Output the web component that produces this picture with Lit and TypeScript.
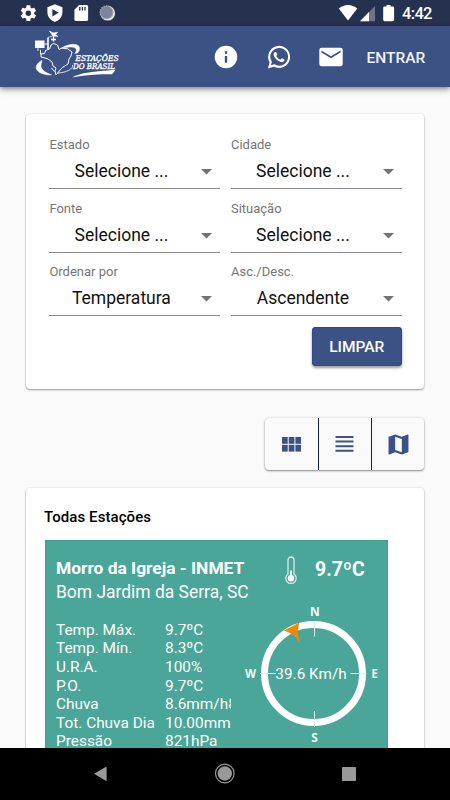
import { LitElement, html, css, svg } from "lit";
import { customElement, property } from "lit/decorators.js";

@customElement("status-bar")
class StatusBar extends LitElement {
  static styles = css`
    :host { display: block; height: 26px; background: #26304f; flex: none; }
    svg { display: block; }
    text { font: 500 16.5px Roboto, sans-serif; fill: #fff; }
  `;
  render() {
    return html`<svg width="450" height="26" viewBox="0 0 450 26" fill="#fff">
      <g transform="translate(19 3.8) scale(.78)">
        <path d="M19.43 12.98c.04-.32.07-.64.07-.98s-.03-.66-.07-.98l2.11-1.65c.19-.15.24-.42.12-.64l-2-3.46c-.12-.22-.39-.3-.61-.22l-2.49 1c-.52-.4-1.08-.73-1.69-.98l-.38-2.65C14.46 2.18 14.25 2 14 2h-4c-.25 0-.46.18-.49.42l-.38 2.65c-.61.25-1.17.59-1.69.98l-2.49-1c-.23-.09-.49 0-.61.22l-2 3.46c-.13.22-.07.49.12.64l2.11 1.65c-.04.32-.07.65-.07.98s.03.66.07.98l-2.11 1.65c-.19.15-.24.42-.12.64l2 3.46c.12.22.39.3.61.22l2.49-1c.52.4 1.08.73 1.69.98l.38 2.65c.03.24.24.42.49.42h4c.25 0 .46-.18.49-.42l.38-2.65c.61-.25 1.17-.59 1.69-.98l2.49 1c.23.09.49 0 .61-.22l2-3.46c.12-.22.07-.49-.12-.64zM12 15.5a3.5 3.5 0 1 1 0-7 3.5 3.5 0 0 1 0 7z"/>
      </g>
      <path d="M54.900 4.200l7.500 3.100v5c0 4.500-3.200 8.200-7.500 9.600-4.300-1.400-7.500-5.100-7.500-9.600v-5z"/>
      <path d="M52.400 9v7.600l6.200-3.800z" fill="#26304f"/>
      <path d="M79.200 5h7.300q1.600 0 1.600 1.600v12.900q0 1.600-1.600 1.600H76q-1.600 0-1.600-1.600V9.800z"/>
      <path d="M79.800 7v3.600M82.400 7v3.600M85 7v3.600" stroke="#26304f" stroke-width="1.300"/>
      <circle cx="107.700" cy="13.200" r="7.400" fill="#e4e6ec"/>
      <circle cx="106.500" cy="12.400" r="6.600" fill="#7d849b"/>
      <circle cx="106.500" cy="12.400" r="6.400" fill="none" stroke="#a9aebd" stroke-width="1.300" stroke-dasharray="1.200 1.200"/>
      <path d="M338.800 8.500C344 3.700 352 3.700 357.300 8.500L348 20.600z"/>
      <path d="M375 6v15.200h-15z" fill="#6d748b"/>
      <path d="M369 12.100v9.100h-9z"/>
      <path d="M386.500 5h4v1.500h2.300q1.300 0 1.300 1.300v12q0 1.400-1.300 1.400h-8.300q-1.300 0-1.300-1.400v-12q0-1.300 1.300-1.300h2z"/>
      <text x="402" y="19.400" textLength="30.500">4:42</text>
    </svg>`;
  }
}

@customElement("brand-logo")
class BrandLogo extends LitElement {
  static styles = css`
    svg { display: block; }
    text { font: italic 7.800px "DejaVu Serif", serif; fill: #fff; }
  `;
  render() {
    return html`<svg width="88" height="52" viewBox="33 29 88 52" fill="none" stroke="#fff" stroke-width="1" stroke-linejoin="round">
      <path d="M51 46l2.500-1.500 4 1.500 1.500 4.500 3-1.500 6 1 4 3-1 4-2 3-1 5-5 3-3 3-4 5-1-4 1-3-3-2-1-4-4-3-3-1-4-1v-3"/>
      <path d="M51 46l-1.500 4-4 1.500-1 3-4 .5v-4M54.500 72.500l-3-3.500"/>
      <path d="M48 50V38.500" stroke-width="1.600"/>
      <path d="M48 38.500l4.500-1.500M49.500 32l3.500 2 4.500-.7-2 2.200 2.300 1.800-4.800-.3z" fill="#fff" stroke-width=".7"/>
      <path d="M53.500 36v6.500M51 40.500h5" stroke-width="1.400"/>
      <rect x="35" y="41.500" width="9.500" height="7.500" fill="#fff" stroke="none"/>
      <path d="M44 45h4M38 49v3" stroke-width=".9"/>
      <path d="M61.500 49c6-4 16-5.500 17.800-1 .8 2.500-.3 4.500-1.800 6l-2.800.5c3-3.500 2-6.500-4.200-6.500z" fill="#fff" stroke-width=".4"/>
      <path d="M42 61.500c-7.500 4-8 10 0 13 3 1.200 7 1.600 9.500 1.300-6-2-10-5-10.500-8-.3-2 .5-4 1-6.300z" fill="#fff" stroke-width=".6"/>
      <path d="M72 78.500c9-5 21-6 43.500-7.800-1.200 1.500-2 3.200-3.500 4.600-13 0-24 .5-40 3.200z" fill="#fff" stroke="none"/>
      <path d="M72.500 66c1 4-6 7.500-14.500 8" stroke-width=".8"/>
      <g stroke="#fff" stroke-width=".35"><text x="75.500" y="61.800" textLength="43" lengthAdjust="spacingAndGlyphs">ESTAÇÕES</text>
      <text x="73" y="70.200" textLength="42" lengthAdjust="spacingAndGlyphs">DO BRASIL</text></g>
    </svg>`;
  }
}

@customElement("top-bar")
class TopBar extends LitElement {
  static styles = css`
    :host { display: flex; align-items: center; flex: none; box-sizing: border-box; height: 61px; padding: 0 25px 0 33px;
      background: #3c5184; color: #fff; box-shadow: 0 2px 4px rgba(0,0,0,.34), 0 3px 8px rgba(0,0,0,.16); z-index: 1; }
    brand-logo { display: block; margin: -6px auto 0 0; }
    .icon { width: 26px; height: 26px; fill: #fff; display: block; }
    .chat { margin-left: 27px; }
    .mail { margin-left: 26px; }
    .enter { margin: 2px 0 0 22.500px; width: 58.500px; font: 500 15.500px Roboto, sans-serif; color: #f2f4f9; white-space: nowrap; }
  `;
  render() {
    return html`<brand-logo></brand-logo>
      <svg class="icon" viewBox="0 0 24 24"><path d="M12 1.600a10.400 10.400 0 1 0 0 20.800 10.400 10.400 0 0 0 0-20.800zm1.100 15.700h-2.200V11h2.200zm0-8.400h-2.200V6.700h2.200z"/></svg>
      <svg class="icon chat" viewBox="0 0 24 24"><path d="M12.100 1.700A10.200 10.200 0 0 0 3.300 17l-1.600 5.500 5.700-1.500A10.200 10.200 0 1 0 12.100 1.700zm0 18.400a8.200 8.200 0 0 1-4.400-1.300l-3.200.8.900-3.100a8.200 8.200 0 1 1 6.700 3.600z"/><path d="M16.560 14c-.250-.120-1.470-.720-1.690-.810-.230-.080-.390-.120-.560.120-.170.250-.640.810-.780.970-.140.170-.290.190-.530.060-.250-.120-1.050-.390-1.990-1.230-.740-.660-1.230-1.470-1.380-1.720-.140-.250-.010-.380.110-.510.110-.110.250-.290.370-.430s.170-.250.250-.410c.080-.170.040-.310-.020-.430s-.560-1.340-.760-1.840c-.200-.480-.410-.420-.560-.430h-.480c-.170 0-.430.060-.660.310-.220.250-.860.850-.860 2.070s.890 2.400 1.010 2.560c.120.170 1.750 2.670 4.230 3.740 2.480 1.070 2.480.710 2.930.670.450-.040 1.450-.590 1.650-1.160.200-.580.200-1.060.140-1.170-.060-.110-.220-.170-.420-.330z"/></svg>
      <svg class="icon mail" viewBox="0 0 24 24"><path fill-rule="evenodd" d="M3.200 3.500h17.600a2 2 0 0 1 2 2v13a2 2 0 0 1-2 2H3.200a2 2 0 0 1-2-2v-13a2 2 0 0 1 2-2zM12 13.200l8.800-5.400V6L12 11.400 3.200 6v1.800z"/></svg>
      <span class="enter">ENTRAR</span>`;
  }
}

@customElement("select-field")
class SelectField extends LitElement {
  @property() label = "";
  @property() value = "";
  static styles = css`
    :host { display: block; box-sizing: border-box; height: 52px; border-bottom: 1px solid #8a8a8a; font-family: Roboto, sans-serif; }
    .label { font-size: 13px; line-height: 16px; color: #757575; }
    .row { display: flex; align-items: center; height: 36px; padding-right: 8px; }
    .value { flex: 1; text-align: center; margin-right: 7.500px; color: #111; font-size: 17.500px; white-space: nowrap; }
    .arrow { width: 11px; height: 6px; margin-top: 2px; fill: #737373; }
  `;
  render() {
    return html`<div class="label">${this.label}</div>
      <div class="row"><span class="value">${this.value}</span><svg class="arrow" viewBox="0 0 11 6"><path d="M0 0h11L5.500 5.500z"/></svg></div>`;
  }
}

@customElement("wind-compass")
class WindCompass extends LitElement {
  @property() speed = "";
  static styles = css`
    :host { display: block; }
    svg { display: block; }
    .dir { font: bold 12px "Open Sans", sans-serif; fill: #fff; opacity: .92; text-anchor: middle; }
    .speed { font: 15.300px Roboto, sans-serif; fill: #fff; }
  `;
  render() {
    return html`<svg width="140" height="145" viewBox="243 602 140 145">
      <circle cx="313.500" cy="673.500" r="49" fill="none" stroke="#fff" stroke-width="7"/>
      <path d="M314.500 621v15.500M314.500 711v16M260 673.500h16M350.500 673.500h16" stroke="#dcefec" stroke-width="1"/>
      <path d="M283.800 630.500L299.200 622.800 297.600 632.500 299.600 642.500 293.500 634.500z" fill="#fb8500"/>
      <text class="dir" x="314.800" y="615.600">N</text>
      <text class="dir" x="314.500" y="741.500">S</text>
      <text class="dir" x="250.500" y="678" textLength="11" lengthAdjust="spacingAndGlyphs">W</text>
      <text class="dir" x="374.500" y="678">E</text>
      <text class="speed" x="275.300" y="678.500" textLength="71.500">${this.speed}</text>
    </svg>`;
  }
}

@customElement("station-card")
class StationCard extends LitElement {
  static styles = css`
    :host { display: block; box-sizing: border-box; width: 343.500px; height: 240px; padding: 16px 8px 0 10.500px; background: #4aa698;
      border: solid #3ca091; border-width: 1px 1px 0 1px; color: #fff; font-family: Roboto, sans-serif; }
    .head { display: flex; align-items: flex-start; height: 47px; }
    .title { width: 214px; white-space: nowrap; }
    .name { font-weight: 700; font-size: 17.400px; line-height: 22px; }
    .city { font-size: 17.450px; line-height: 26px; }
    .thermo { margin: -1px 0 0 11.500px; display: block; }
    .temp { margin: 1px 0 0 15.500px; font-weight: 700; font-size: 19.500px; line-height: 24px; }
    .body { display: flex; }
    .data { display: grid; grid-template-columns: 109px 66px; grid-auto-rows: 18.600px; width: 175px; margin-top: 16.900px; font-size: 15.400px; line-height: 18.600px; }
    .data span { white-space: nowrap; overflow: hidden; }
    .compass { margin: -2.500px 0 0 11.500px; }
  `;
  private readings = [
    ["Temp. Máx.", "9.7ºC"], ["Temp. Mín.", "8.3ºC"], ["U.R.A.", "100%"], ["P.O.", "9.7ºC"],
    ["Chuva", "8.6mm/h8"], ["Tot. Chuva Dia", "10.00mm"], ["Pressão", "821hPa"],
  ];
  render() {
    return html`<div class="head">
        <div class="title"><div class="name">Morro da Igreja - INMET</div><div class="city">Bom Jardim da Serra, SC</div></div>
        <svg class="thermo" width="18" height="30" viewBox="0 0 18 30" fill="none" stroke="#d8ece9" stroke-width="1.300">
          <path d="M6 18V4a3 3 0 0 1 6 0v14a5.200 5.200 0 1 1-6 0z"/><path d="M9 14.500v6" stroke="#fff" stroke-width="1.800"/><circle cx="9" cy="22.300" r="3.200" fill="#fff" stroke="none"/>
        </svg>
        <div class="temp">9.7ºC</div>
      </div>
      <div class="body"><div class="data">${this.readings.map(([k, v]) => html`<span>${k}</span><span>${v}</span>`)}</div>
        <wind-compass class="compass" speed="39.6 Km/h"></wind-compass></div>`;
  }
}

@customElement("app-root")
class AppRoot extends LitElement {
  static styles = css`
    :host { display: flex; flex-direction: column; width: 450px; height: 800px; overflow: hidden; background: #fafafa; font-family: Roboto, sans-serif; }
    main { flex: 1; min-height: 0; overflow: hidden; display: flex; flex-direction: column; padding: 27px 26px 0 26px; }
    .card { background: #fff; border-radius: 4px; box-shadow: 0 1px 2px rgba(0,0,0,.38), 0 0 2px rgba(0,0,0,.12); box-sizing: border-box; flex: none; }
    .filters { height: 275px; padding: 23px 22.500px 0 23.400px; }
    .fields { display: grid; grid-template-columns: 1fr 1fr; column-gap: 11px; row-gap: 11.500px; }
    .actions { display: flex; justify-content: flex-end; margin-top: 11px; }
    .clear { width: 89.500px; height: 39px; border: 0; padding: 0; border-radius: 4px; background: #3c5184; color: #fff; font: 500 15.500px Roboto, sans-serif;
      box-shadow: 0 2px 3px rgba(0,0,0,.4), inset 0 0 0 1px #2c4b8c; }
    .views { display: flex; align-self: flex-end; margin-top: 29px; width: 159.500px; height: 52px; border-radius: 4px; background: #fafafa; flex: none;
      box-shadow: 0 1px 2px rgba(0,0,0,.42), 0 0 3px rgba(0,0,0,.12); }
    .view { flex: 1; display: flex; align-items: center; justify-content: center; }
    .view:first-child { flex: 0 0 53px; }
    .view:last-child { flex: 0 0 53px; }
    .view + .view { border-left: 1px solid #071f5c; box-sizing: border-box; }
    .view svg { fill: #3c5184; display: block; }
    .stations { margin-top: 18px; padding: 20px 0 0 18.500px; height: 400px; }
    h2 { margin: 0 0 14px -.5px; font: 500 15px/18px Roboto, sans-serif; color: #000; letter-spacing: .08px; }
    .nav { height: 52px; flex: none; background: #000; display: flex; }
  `;
  private fields = [
    ["Estado", "Selecione ..."], ["Cidade", "Selecione ..."], ["Fonte", "Selecione ..."],
    ["Situação", "Selecione ..."], ["Ordenar por", "Temperatura"], ["Asc./Desc.", "Ascendente"],
  ];
  private grid() {
    return [0, 1, 2].flatMap((c) => [0, 1].map((r) => svg`<rect x=${c * 6.7} y=${r * 7.8} width="5.700" height="6.800"/>`));
  }
  render() {
    return html`<status-bar></status-bar><top-bar></top-bar>
      <main>
        <section class="card filters">
          <div class="fields">${this.fields.map(([l, v]) => html`<select-field .label=${l} .value=${v}></select-field>`)}</div>
          <div class="actions"><button class="clear">LIMPAR</button></div>
        </section>
        <div class="views">
          <div class="view"><svg width="19" height="15" viewBox="0 0 19 15">${this.grid()}</svg></div>
          <div class="view"><svg width="19" height="16" viewBox="0 0 19 16"><path d="M.5 0h18v2H.5zM.5 4.600h18v2H.5zM.5 9.200h18v2H.5zM.5 13.800h18v2H.5z"/></svg></div>
          <div class="view"><svg width="21" height="21" viewBox="2.500 2.500 19 19"><path d="M20.500 3l-.16.030L15 5.100 9 3 3.360 4.900c-.210.070-.360.250-.360.480V20.500c0 .280.220.500.500.500l.160-.030L9 18.900l6 2.100 5.640-1.900c.210-.070.360-.250.360-.480V3.500c0-.280-.220-.500-.500-.500zM15 19l-6-2.110V5l6 2.110z"/></svg></div>
        </div>
        <section class="card stations"><h2>Todas Estações</h2><station-card></station-card></section>
      </main>
      <div class="nav"><svg width="450" height="52" viewBox="0 0 450 52" fill="#999">
        <path d="M94 25.700L106.600 18.500v14.700z"/><circle cx="224.800" cy="25.500" r="7.200"/><circle cx="224.800" cy="25.500" r="9.300" fill="none" stroke="#999" stroke-width="1.200"/><rect x="342" y="19" width="14" height="14" rx="1"/>
      </svg></div>`;
  }
}
